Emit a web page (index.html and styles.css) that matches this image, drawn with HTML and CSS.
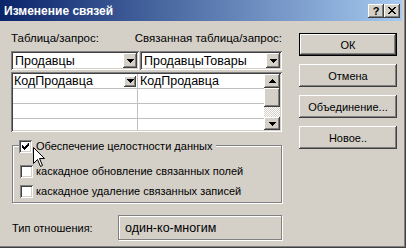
FILE: index.html
```html
<!DOCTYPE html>
<html lang="ru">
<head>
    <meta charset="UTF-8">
    <title>Изменение связей</title>
    <link rel="stylesheet" href="styles.css">
</head>
<body>
    <div class="window">
        <!-- Заголовок окна -->
        <div class="titlebar">
            <span class="title">Изменение связей</span>
            <div class="caption-buttons">
                <span class="cap-btn raised help">?</span>
                <span class="cap-btn raised">
                    <svg class="glyph" width="8" height="7" viewBox="0 0 8 7"><path d="M0 0h2v1h1v1h2v-1h1v-1h2v1h-1v1h-1v1h-1v1h1v1h1v1h1v1h-2v-1h-1v-1h-2v1h-1v1h-2v-1h1v-1h1v-1h1v-1h-1v-1h-1v-1h-1z"/></svg>
                </span>
            </div>
        </div>

        <div class="content">
            <div class="left">
                <div class="labels">
                    <span class="lbl-left">Таблица/запрос:</span>
                    <span>Связанная таблица/запрос:</span>
                </div>

                <div class="combos">
                    <div class="combo combo-left sunken">
                        <span class="combo-text">Продавцы</span>
                        <span class="drop raised">
                            <svg class="glyph" width="7" height="4" viewBox="0 0 7 4"><path d="M0 0h7v1h-1v1h-1v1h-1v1h-1v-1h-1v-1h-1v-1h-1z"/></svg>
                        </span>
                    </div>
                    <div class="combo combo-right sunken">
                        <span class="combo-text">ПродавцыТовары</span>
                        <span class="drop raised">
                            <svg class="glyph" width="7" height="4" viewBox="0 0 7 4"><path d="M0 0h7v1h-1v1h-1v1h-1v1h-1v-1h-1v-1h-1v-1h-1z"/></svg>
                        </span>
                    </div>
                </div>

                <!-- Таблица полей -->
                <div class="fields sunken">
                    <div class="rows">
                        <div class="row">
                            <div class="cell c1">
                                <span>КодПродавца</span>
                                <span class="drop small raised">
                                    <svg class="glyph" width="7" height="4" viewBox="0 0 7 4"><path d="M0 0h7v1h-1v1h-1v1h-1v1h-1v-1h-1v-1h-1v-1h-1z"/></svg>
                                </span>
                            </div>
                            <div class="cell c2">КодПродавца</div>
                        </div>
                        <div class="row"><div class="cell c1"></div><div class="cell c2"></div></div>
                        <div class="row"><div class="cell c1"></div><div class="cell c2"></div></div>
                        <div class="row last"><div class="cell c1"></div><div class="cell c2"></div></div>
                    </div>
                    <div class="scrollbar">
                        <span class="sb-btn sb-up raised">
                            <svg class="glyph" width="7" height="4" viewBox="0 0 7 4"><path d="M3 0h1v1h1v1h1v1h1v1h-7v-1h1v-1h1v-1h1z"/></svg>
                        </span>
                        <span class="sb-thumb raised"></span>
                        <span class="sb-track"></span>
                        <span class="sb-btn sb-down raised">
                            <svg class="glyph" width="7" height="4" viewBox="0 0 7 4"><path d="M0 0h7v1h-1v1h-1v1h-1v1h-1v-1h-1v-1h-1v-1h-1z"/></svg>
                        </span>
                    </div>
                </div>

                <!-- Целостность данных -->
                <div class="group">
                    <label class="group-title check-row">
                        <span class="checkbox sunken">
                            <svg class="glyph" width="7" height="7" viewBox="0 0 7 7"><path d="M6 0h1v3h-1v1h-1v1h-1v1h-1v1h-1v-1h-1v-1h-1v-3h1v1h1v1h1v-1h1v-1h1z"/></svg>
                        </span>
                        <span>Обеспечение целостности данных</span>
                    </label>
                    <label class="check-row">
                        <span class="checkbox sunken"></span>
                        <span>каскадное обновление связанных полей</span>
                    </label>
                    <label class="check-row">
                        <span class="checkbox sunken"></span>
                        <span>каскадное удаление связанных записей</span>
                    </label>
                </div>

                <div class="reltype">
                    <span class="reltype-label">Тип отношения:</span>
                    <span class="reltype-value">один-ко-многим</span>
                </div>
            </div>

            <div class="buttons">
                <button class="btn default">ОК</button>
                <button class="btn">Отмена</button>
                <button class="btn">Объединение...</button>
                <button class="btn">Новое..</button>
            </div>
        </div>

        <svg class="cursor" width="13" height="21" viewBox="0 0 13 21">
            <path d="M0.5 0.5V16.5L4.5 12.5L7.5 19.5L9.5 18.5L6.5 11.5H11.5Z" fill="#fff" stroke="#000" stroke-width="1"/>
        </svg>
    </div>
</body>
</html>
```

FILE: styles.css
```css
body {
    margin: 0;
    background: #fff;
    font-family: "Liberation Sans", Arial, sans-serif;
    font-size: 11px;
    color: #000;
}
.window {
    position: relative;
    width: 406px;
    height: 248px;
    box-sizing: border-box;
    background: #d4d0c8;
    border-right: 1px solid #404040;
    border-bottom: 1px solid #404040;
    box-shadow: inset -1px -1px #808080;
}
.raised {
    background: #d4d0c8;
    box-shadow: inset -1px -1px #404040, inset 1px 1px #fff, inset -2px -2px #808080, inset 2px 2px #d4d0c8;
}
.sunken {
    box-shadow: inset 1px 1px #808080, inset -1px -1px #fff, inset 2px 2px #404040, inset -2px -2px #d4d0c8;
}
.glyph path {
    fill: #000;
}

/* title bar */
.titlebar {
    height: 21px;
    margin-right: 3px;
    padding-left: 4px;
    display: flex;
    align-items: center;
    justify-content: space-between;
    background: linear-gradient(to right, #0a246a, #a6caf0);
}
.title {
    color: #fff;
    font-weight: bold;
    font-size: 12px;
}
.caption-buttons {
    display: flex;
    margin-right: 2px;
}
.cap-btn {
    width: 16px;
    height: 14px;
    display: flex;
    align-items: center;
    justify-content: center;
}
.cap-btn.help {
    font-weight: bold;
    font-size: 11px;
    line-height: 14px;
}

/* content */
.content {
    display: grid;
    grid-template-columns: 271px 98px;
    column-gap: 17px;
    padding: 11px 0 0 11px;
}
.labels {
    display: flex;
    height: 13px;
    line-height: 13px;
    font-size: 11.5px;
    white-space: nowrap;
}
.lbl-left {
    width: 129px;
}
.combos {
    display: flex;
    margin-top: 6px;
    gap: 1px;
}
.combo {
    height: 19px;
    box-sizing: border-box;
    padding: 2px;
    background: #fff;
    display: flex;
    align-items: center;
    justify-content: space-between;
    font-size: 12.5px;
}
.combo-left {
    width: 128px;
}
.combo-right {
    flex: 1;
}
.combo-text {
    padding-left: 2px;
}
.drop {
    width: 14px;
    height: 15px;
    display: flex;
    align-items: center;
    justify-content: center;
}
.drop.small {
    width: 12px;
    height: 11px;
    margin-right: 1px;
}

/* fields grid */
.fields {
    margin-top: 2px;
    height: 60px;
    box-sizing: border-box;
    padding: 2px;
    display: flex;
}
.rows {
    flex: 1;
    background: #fff;
}
.row {
    display: flex;
    height: 15px;
    box-sizing: border-box;
    border-bottom: 1px solid #c0c0c0;
}
.row.last {
    height: 11px;
    border-bottom: none;
}
.cell {
    display: flex;
    align-items: center;
    line-height: 14px;
    font-size: 12.5px;
}
.c1 {
    width: 125px;
    padding-left: 1px;
    justify-content: space-between;
    box-sizing: border-box;
    border-right: 1px solid #c0c0c0;
}
.c2 {
    flex: 1;
    padding-left: 2px;
}
.scrollbar {
    width: 16px;
    display: flex;
    flex-direction: column;
}
.sb-btn {
    height: 14px;
    display: flex;
    align-items: center;
    justify-content: center;
}
.sb-down {
    height: 13px;
}
.sb-thumb {
    height: 19px;
}
.sb-track {
    flex: 1;
    background-image: conic-gradient(#fff 25%, #d4d0c8 0 50%, #fff 0 75%, #d4d0c8 0);
    background-size: 2px 2px;
}

/* group box */
.group {
    position: relative;
    margin: 13px 0 0 1px;
    width: 270px;
    box-sizing: border-box;
    border: 1px solid #808080;
    box-shadow: inset 1px 1px #fff, 1px 1px #fff;
    padding: 19px 0 4px 7px;
    display: flex;
    flex-direction: column;
    gap: 7px;
}
.check-row {
    display: flex;
    align-items: center;
    gap: 3px;
    height: 13px;
    line-height: 13px;
}
.group-title {
    position: absolute;
    top: -6px;
    left: 6px;
    padding-right: 4px;
    gap: 4px;
    background: #d4d0c8;
}
.checkbox {
    width: 13px;
    height: 13px;
    box-sizing: border-box;
    background: #fff;
    display: flex;
    align-items: center;
    justify-content: center;
}

/* relationship type */
.reltype {
    display: flex;
    align-items: center;
    margin: 12px 0 0 1px;
}
.reltype-label {
    width: 106px;
}
.reltype-value {
    width: 164px;
    height: 25px;
    box-sizing: border-box;
    border: 1px solid #808080;
    box-shadow: inset 1px 1px #fff, 1px 1px #fff;
    padding-left: 6px;
    display: flex;
    align-items: center;
    font-size: 12.5px;
}

/* buttons */
.buttons {
    display: flex;
    flex-direction: column;
    gap: 8px;
    padding-top: 1px;
}
.btn {
    height: 23px;
    padding: 0;
    border: none;
    font-family: "Liberation Sans", Arial, sans-serif;
    font-size: 11px;
    color: #000;
    background: #d4d0c8;
    box-shadow: inset -1px -1px #404040, inset 1px 1px #fff, inset -2px -2px #808080, inset 2px 2px #d4d0c8;
}
.btn.default {
    border: 1px solid #000;
}

.cursor {
    position: absolute;
    left: 33px;
    top: 147px;
}
```
